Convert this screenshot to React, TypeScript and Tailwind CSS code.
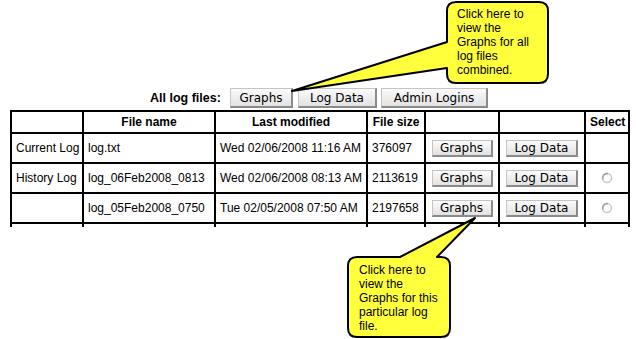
import React from 'react'

const rows = [
  { label: 'Current Log', file: 'log.txt', date: 'Wed 02/06/2008 11:16 AM', size: '376097', radio: false },
  { label: 'History Log', file: 'log_06Feb2008_0813', date: 'Wed 02/06/2008 08:13 AM', size: '2113619', radio: true },
  { label: '', file: 'log_05Feb2008_0750', date: 'Tue 02/05/2008 07:50 AM', size: '2197658', radio: true },
]

const Btn: React.FC<{ children?: React.ReactNode; className?: string }> = ({ children, className }) => (
  <span
    className={
      'inline-flex items-center justify-center bg-gradient-to-b from-[#fbfbfb] to-[#e2e2e2] border border-[#c4c4c4] border-r-2 border-b-2 border-r-[#8a8a8a] border-b-[#8a8a8a] text-[12px] text-black font-["DejaVu_Sans",sans-serif] leading-none ' +
      (className ?? '')
    }
  >
    {children}
  </span>
)

const Radio = () => (
  <svg width="12" height="12" viewBox="0 0 12 12" className="mx-auto block">
    <circle cx="6" cy="6" r="4.5" fill="#fff" stroke="#c9c9c9" strokeWidth="1.5" />
    <path d="M 2 7.5 A 4.5 4.5 0 0 1 7 1.6" fill="none" stroke="#9a9a9a" strokeWidth="1.3" />
  </svg>
)

const cell = 'border border-black px-[4px] align-middle whitespace-nowrap'

export default function App() {
  return (
    <div className="relative w-[636px] h-[339px] bg-white overflow-hidden font-['Liberation_Sans',Arial,sans-serif] text-[12px] text-black">
      {/* top line */}
      <div className="flex items-center h-[20px] mt-[88px] pl-[150px]">
        <span className="font-bold text-[12.5px] w-[80px]">All log files:</span>
        <Btn className="w-[63px] h-[20px]">Graphs</Btn>
        <Btn className="w-[79px] h-[20px] ml-[5px]">Log Data</Btn>
        <Btn className="w-[107px] h-[20px] ml-[4px]">Admin Logins</Btn>
      </div>

      {/* table, cut off at the bottom like the screenshot */}
      <div className="ml-[10px] mt-[2px] h-[117px] overflow-hidden">
        <table className="border-separate border-spacing-0 table-fixed w-[620px] border border-black">
          <colgroup>
            <col className="w-[72px]" />
            <col className="w-[132px]" />
            <col className="w-[152px]" />
            <col className="w-[58px]" />
            <col className="w-[74px]" />
            <col className="w-[86px]" />
            <col />
          </colgroup>
          <thead>
            <tr className="h-[22px]">
              <th className={cell}></th>
              <th className={cell + ' font-bold'}>File name</th>
              <th className={cell + ' font-bold'}>Last modified</th>
              <th className={cell + ' font-bold'}>File size</th>
              <th className={cell}></th>
              <th className={cell}></th>
              <th className={cell + ' font-bold'}>Select</th>
            </tr>
          </thead>
          <tbody>
            {rows.map((r, i) => (
              <tr key={i} className="h-[30px]">
                <td className={cell}>{r.label}</td>
                <td className={cell}>{r.file}</td>
                <td className={cell}>{r.date}</td>
                <td className={cell}>{r.size}</td>
                <td className={cell + ' text-center'}>
                  <Btn className="w-[61px] h-[17px]">Graphs</Btn>
                </td>
                <td className={cell + ' text-center'}>
                  <Btn className="w-[72px] h-[17px]">Log Data</Btn>
                </td>
                <td className={cell}>{r.radio && <Radio />}</td>
              </tr>
            ))}
            {/* next row is only partly visible in the screenshot */}
            <tr className="h-[30px]">
              <td className={cell}></td>
              <td className={cell}></td>
              <td className={cell}></td>
              <td className={cell}></td>
              <td className={cell + ' text-center'}>
                <Btn className="w-[61px] h-[17px]" />
              </td>
              <td className={cell + ' text-center'}>
                <Btn className="w-[72px] h-[17px]" />
              </td>
              <td className={cell}></td>
            </tr>
          </tbody>
        </table>
      </div>

      {/* callouts */}
      <svg className="absolute inset-0 pointer-events-none" width="636" height="339" viewBox="0 0 636 339">
        <path
          d="M 456 2 H 539 Q 548 2 548 11 V 74 Q 548 83 539 83 H 456 Q 447 83 447 74 V 68 L 292 91 L 447 42 V 11 Q 447 2 456 2 Z"
          fill="#ffff3c"
          stroke="#000"
          strokeWidth="2"
          strokeLinejoin="round"
        />
        <path
          d="M 357 257 H 400 L 475 218 L 437 257 H 441 Q 450 257 450 266 V 328 Q 450 337 441 337 H 357 Q 348 337 348 328 V 266 Q 348 257 357 257 Z"
          fill="#ffff3c"
          stroke="#000"
          strokeWidth="2"
          strokeLinejoin="round"
        />
      </svg>
      <div className="absolute left-[457px] top-[7px] leading-[14px]">
        Click here to<br />view the<br />Graphs for all<br />log files<br />combined.
      </div>
      <div className="absolute left-[359px] top-[263px] leading-[14px]">
        Click here to<br />view the<br />Graphs for this<br />particular log<br />file.
      </div>
    </div>
  )
}
